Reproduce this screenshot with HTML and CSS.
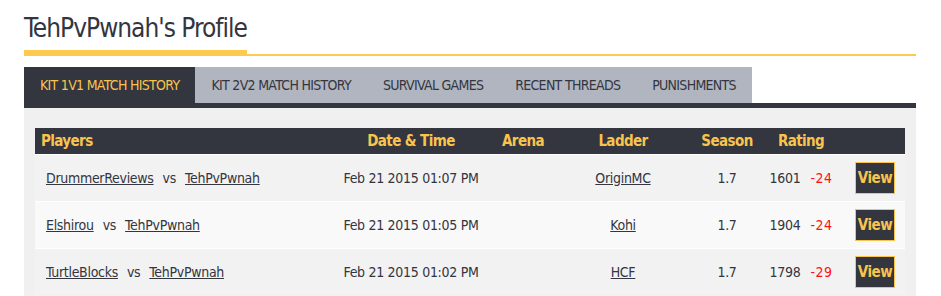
FILE: index.html
```html
<!DOCTYPE html>
<html lang="en">
<head>
  <meta charset="UTF-8">
  <title>TehPvPwnah's Profile</title>
  <link rel="stylesheet" href="styles.css">
</head>
<body>
  <div class="page">
    <div class="title-wrap">
      <h1>TehPvPwnah's Profile</h1>
    </div>

    <ul class="tabs">
      <li class="tab active">KIT 1V1 MATCH HISTORY</li>
      <li class="tab">KIT 2V2 MATCH HISTORY</li>
      <li class="tab">SURVIVAL GAMES</li>
      <li class="tab">RECENT THREADS</li>
      <li class="tab">PUNISHMENTS</li>
    </ul>

    <div class="panel">
      <table class="matches">
        <colgroup>
          <col style="width: 295px">
          <col style="width: 162px">
          <col style="width: 62px">
          <col style="width: 138px">
          <col style="width: 70px">
          <col style="width: 78px">
          <col style="width: 65px">
        </colgroup>
        <thead>
          <tr>
            <th class="left">Players</th>
            <th>Date &amp; Time</th>
            <th>Arena</th>
            <th>Ladder</th>
            <th>Season</th>
            <th>Rating</th>
            <th></th>
          </tr>
        </thead>
        <tbody>
          <tr>
            <td class="players"><a href="#">DrummerReviews</a><span class="vs">vs</span><a href="#">TehPvPwnah</a></td>
            <td>Feb 21 2015 01:07 PM</td>
            <td></td>
            <td><a href="#">OriginMC</a></td>
            <td>1.7</td>
            <td>1601<span class="loss">-24</span></td>
            <td><button class="view-btn">View</button></td>
          </tr>
          <tr>
            <td class="players"><a href="#">Elshirou</a><span class="vs">vs</span><a href="#">TehPvPwnah</a></td>
            <td>Feb 21 2015 01:05 PM</td>
            <td></td>
            <td><a href="#">Kohi</a></td>
            <td>1.7</td>
            <td>1904<span class="loss">-24</span></td>
            <td><button class="view-btn">View</button></td>
          </tr>
          <tr>
            <td class="players"><a href="#">TurtleBlocks</a><span class="vs">vs</span><a href="#">TehPvPwnah</a></td>
            <td>Feb 21 2015 01:02 PM</td>
            <td></td>
            <td><a href="#">HCF</a></td>
            <td>1.7</td>
            <td>1798<span class="loss">-29</span></td>
            <td><button class="view-btn">View</button></td>
          </tr>
        </tbody>
      </table>
    </div>
  </div>
</body>
</html>
```

FILE: styles.css
```css
body {
  margin: 0;
  background: #fff;
  color: #33353f;
  font-family: "DejaVu Sans Condensed", "DejaVu Sans", sans-serif;
  font-stretch: condensed;
  overflow: hidden;
}
.page {
  width: 892px;
  margin-left: 24px;
}
.title-wrap {
  border-bottom: 2px solid #fdc94f;
  padding-top: 6px;
}
h1 {
  display: inline-block;
  margin: 0;
  font-size: 26px;
  font-weight: normal;
  letter-spacing: -1px;
  line-height: 44px;
  border-bottom: 4px solid #fdc94f;
}
.tabs {
  display: flex;
  list-style: none;
  margin: 11px 0 0;
  padding: 0;
  border-bottom: 5px solid #33353f;
}
.tab {
  padding: 0 16px;
  height: 36px;
  line-height: 37px;
  background: #b1b5bf;
  font-size: 14px;
  letter-spacing: -0.7px;
}
.tab.active {
  background: #33353f;
  color: #f8c44e;
}
.panel {
  background: #f0f0f0;
  padding: 20px 11px 0;
  height: 200px;
}
.matches {
  width: 870px;
  table-layout: fixed;
  border-collapse: collapse;
  font-size: 14px;
  letter-spacing: -0.3px;
}
.matches th {
  background: #33353f;
  color: #f8c44e;
  height: 26px;
  padding: 0;
  font-size: 15px;
  font-weight: bold;
  letter-spacing: -0.6px;
  text-align: center;
}
.matches th.left {
  text-align: left;
  padding-left: 6px;
}
.matches td {
  height: 46px;
  padding: 0;
  text-align: center;
  border-top: 1px solid #fff;
  background: #f2f2f2;
}
.matches tbody tr:nth-child(even) td {
  background: #f9f9f9;
}
.matches td.players {
  text-align: left;
  padding-left: 11px;
}
.matches a {
  color: #33353f;
}
.vs {
  margin: 0 9px;
}
.loss {
  color: #ff1010;
  margin-left: 10px;
  letter-spacing: 0.5px;
}
.view-btn {
  display: block;
  margin: 0 0 0 15px;
  background: #33353f;
  color: #f8c44e;
  border: 1px solid #f8c44e;
  font-family: inherit;
  font-stretch: condensed;
  font-size: 15px;
  font-weight: bold;
  letter-spacing: -0.5px;
  width: 40px;
  height: 32px;
  padding: 0;
  cursor: pointer;
}
```
